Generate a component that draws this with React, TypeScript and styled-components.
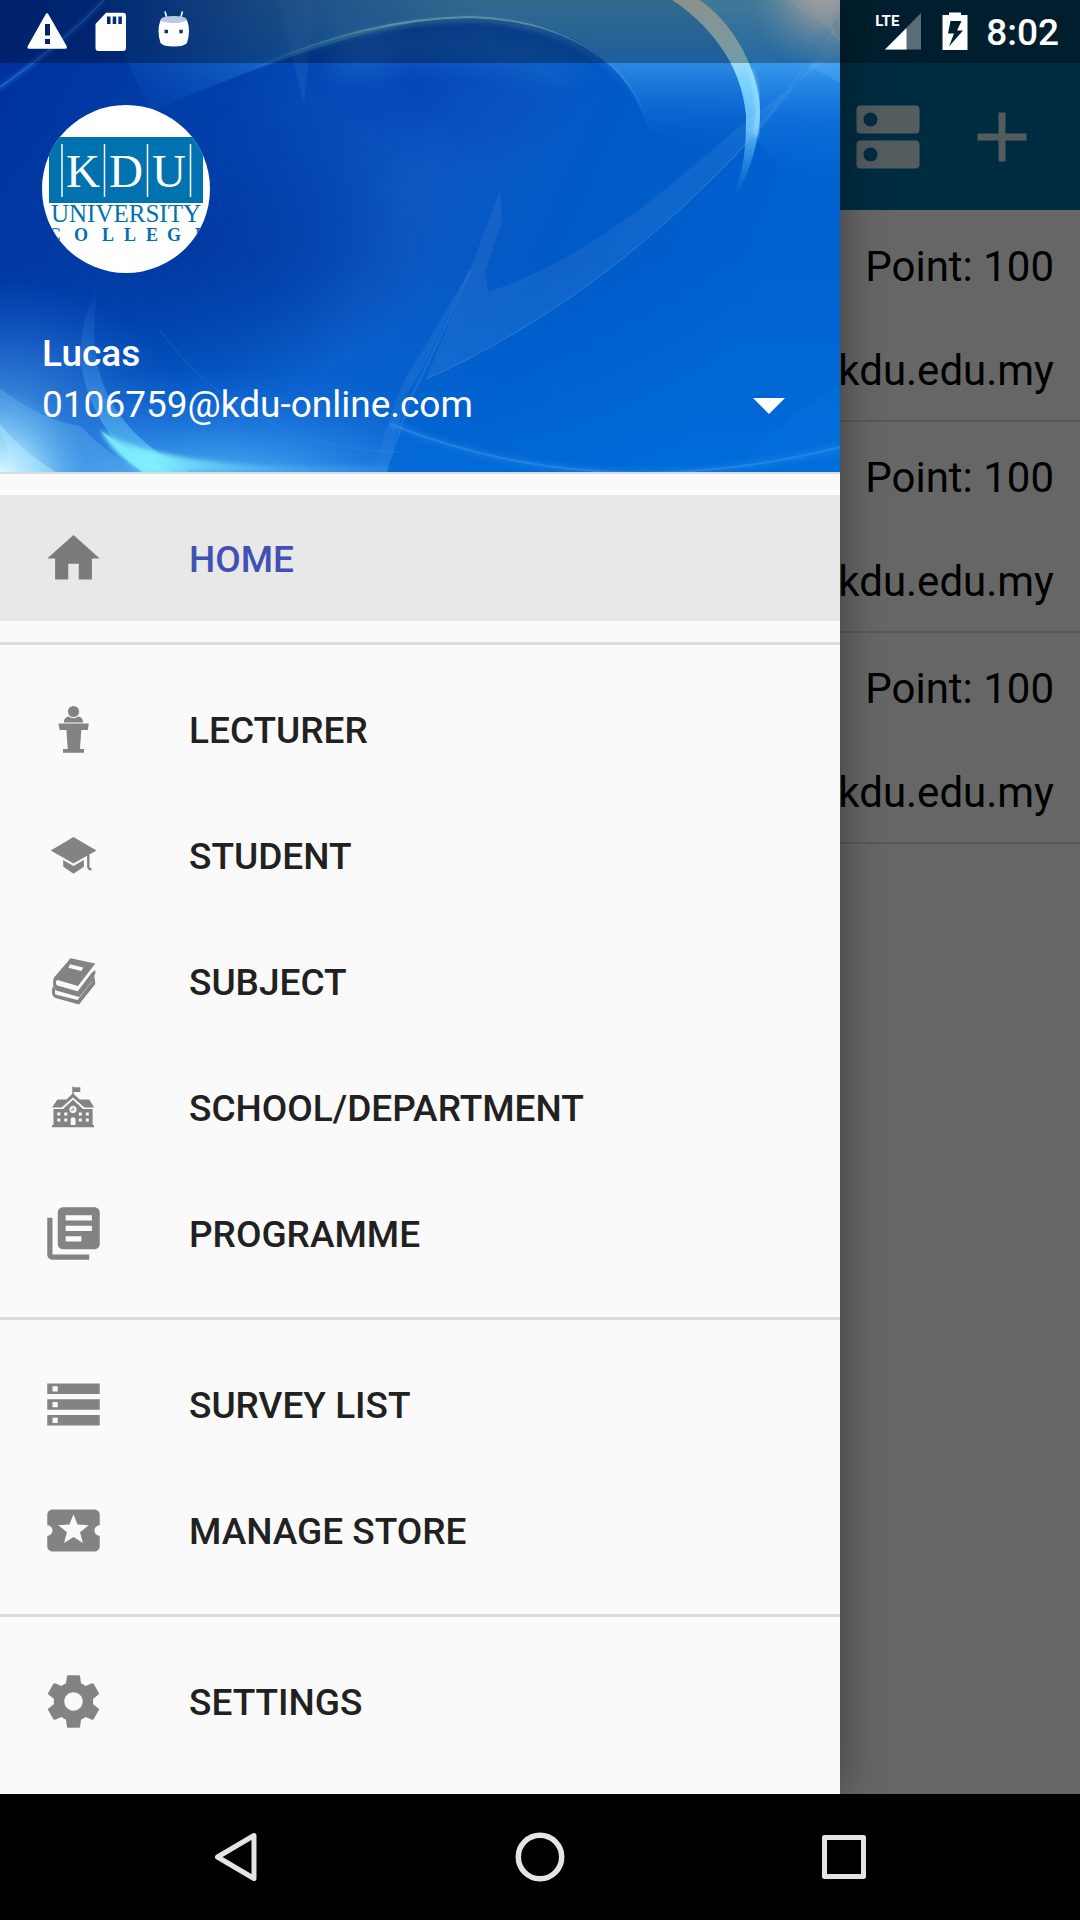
import React from "react";
import styled, { createGlobalStyle } from "styled-components";

const GlobalStyle = createGlobalStyle`
  * { box-sizing: border-box; }
  body { margin: 0; background: #000; font-family: Roboto, "Noto Sans", sans-serif; }
  button { font: inherit; border: 0; padding: 0; background: none; cursor: pointer; }
  svg { display: block; }
`;

const Device = styled.div`
  display: flex;
  flex-direction: column;
  min-height: 100vh;
`;

/* The screen, the scrim, the drawer and the status bar share one grid cell. */
const Stage = styled.div`
  flex: 1;
  display: grid;
  grid-template: minmax(0, 1fr) / minmax(0, 1fr);
  overflow: hidden;
  & > * { grid-area: 1 / 1; }
`;

const Screen = styled.main`
  background: #fff;
`;

const AppBar = styled.header`
  display: flex;
  justify-content: flex-end;
  align-items: center;
  gap: 30px;
  height: 210px;
  padding: 63px 36px 0 0;
  background: #006fa6;
`;

const BarButton = styled.button`
  color: #d2e6f0;
`;

const RecordList = styled.ul`
  margin: 0;
  padding: 1px 0 0;
  list-style: none;
`;

const Record = styled.li`
  display: flex;
  flex-direction: column;
  align-items: flex-end;
  gap: 54px;
  height: 211px;
  padding: 31px 26px 0;
  border-bottom: 2px solid #dedede;
  color: #000;
  font-size: 42px;
  line-height: 50px;
`;

const Scrim = styled.div`
  background: rgba(0, 0, 0, 0.6);
`;

const StatusBar = styled.div`
  align-self: start;
  display: flex;
  justify-content: space-between;
  height: 63px;
  padding: 0 21px 0 26px;
  background: rgba(0, 0, 0, 0.3);
  color: #fff;
`;

const StatusGroup = styled.div<{ $gap: number }>`
  display: flex;
  align-items: center;
  gap: ${(p) => p.$gap}px;
`;

const Signal = styled.div`
  display: grid;
  & > * { grid-area: 1 / 1; }
`;

const NetworkType = styled.span`
  font-size: 15px;
  line-height: 42px;
  font-weight: 700;
`;

const Clock = styled.time`
  font-size: 37px;
  line-height: 63px;
  font-weight: 500;
  padding-top: 2px;
`;

const Drawer = styled.aside`
  display: flex;
  flex-direction: column;
  width: calc(100% - 240px);
  max-width: 840px;
  background: #fafafa;
  box-shadow: 0 0 42px rgba(0, 0, 0, 0.4);
`;

const AccountHeader = styled.div`
  display: grid;
  border-bottom: 2px solid #dcdcdc;
  overflow: hidden;
  & > * { grid-area: 1 / 1; }
`;

const Wallpaper = styled.svg`
  width: 100%;
  height: 100%;
  min-height: 0;
`;

const AccountBody = styled.div`
  display: flex;
  flex-direction: column;
  gap: 55px;
  padding: 105px 55px 42px 42px;
`;

const Avatar = styled.div`
  width: 168px;
  height: 168px;
  border-radius: 50%;
  overflow: hidden;
  background: #fff;
`;

const AccountButton = styled.button`
  display: flex;
  justify-content: space-between;
  align-items: flex-end;
  color: #fff;
  text-align: left;
  font-size: 37px;
  line-height: 51px;
`;

const AccountText = styled.span`
  display: flex;
  flex-direction: column;
`;

const AccountName = styled.span`
  font-weight: 500;
`;

const Caret = styled.svg`
  margin-bottom: 16px;
`;

const Menu = styled.nav`
  display: flex;
  flex-direction: column;
`;

const MenuGroup = styled.ul`
  margin: 0;
  padding: 21px 0;
  list-style: none;
  & + & { border-top: 3px solid #dcdcdc; }
`;

const MenuLink = styled.a<{ $active: boolean }>`
  display: flex;
  align-items: center;
  gap: 84px;
  height: 126px;
  padding: 0 42px;
  background: ${(p) => (p.$active ? "#e8e8e8" : "transparent")};
  color: ${(p) => (p.$active ? "#3f51b5" : "#212121")};
  text-decoration: none;
`;

const MenuLabel = styled.span`
  padding-top: 2px;
  font-size: 37px;
  line-height: 43px;
  font-weight: 500;
`;

const MenuIcon = styled.svg`
  flex: none;
  width: 63px;
  height: 63px;
  color: #000;
  fill: currentColor;
  opacity: 0.47;
`;

const NavBar = styled.footer`
  display: flex;
  justify-content: center;
  height: 126px;
  background: #000;
`;

const NavButton = styled.button`
  flex: 0 1 304px;
  display: flex;
  justify-content: center;
  align-items: center;
`;

type MenuEntry = { label: string; size: number; icon: React.ReactNode; active?: boolean };

const LecturerIcon = (
  <>
    <circle cx="31.5" cy="13.5" r="5.6" />
    <path d="M22 24.5c0-4 2-5.5 5-6 2.500 2.300 6.500 2.300 9 0 3 .5 5 2 5 6z" />
    <path d="M16.500 25.600h30.300l-1 6.400h-6.500l-1.300 19H42v3.700H21V51h4.700l-1.300-19h-6.700z" />
  </>
);

const StudentIcon = (
  <>
    <path d="M31.500 13l23 13.500-23 13L8.700 26.500z" />
    <path d="M21.200 36l10.300 6 10.400-6v6.800l-10.400 6.900-10.300-6.900z" />
    <path d="M46.300 31v11.500q.2 3 3.200 2.800" fill="none" stroke="currentColor" strokeWidth="2.400" />
  </>
);

const SubjectIcon = (
  <>
    <path
      fillRule="evenodd"
      d="M28.500 8.200L53.300 13.500 36 36 15.500 30c-2 .5-2 4.500-.3 5.500l20.500 5.800L49.500 23l3.800-3v4L37 44.800 13.500 38.500c-3.500-2-2.500-8-1.500-11zM28 14.200l-1.700 3.500 13 3.200 1.900-3.300z"
    />
    <path
      fillRule="evenodd"
      d="M11 36l3 3.500c-1.500 1-1.500 4.500.3 5.300L35.500 50 50 31.500l2.500-5.500.8 8L37 54.500 13.500 48c-4.500-2-4-8-2.500-12z"
    />
    <path d="M13 37.500l23.700 6.500L52.500 24.500l-1 5L37.300 47 14 40.600z" />
  </>
);

const SchoolIcon = (
  <>
    <path d="M30.300 10.500h1.300v.8h6.700v4.700h-6.700v3h-1.300z" />
    <path d="M31 17.200l6.600 6.400h9.600l5 8h-9.700L31 21.500 19.700 31.600H10l5.500-8h9z" />
    <path
      fillRule="evenodd"
      d="M31 23.700L41 33h9.600v16H52v2.200H10V49h1.500V33H21zM31 29.800a3.700 3.700 0 1 0 .01 0zM15.300 36.500v3h3v-3zm7 0v3h3v-3zm14.500 0v3h3v-3zm7 0v3h3v-3zM15.300 42.500v3h3v-3zm7 0v3h3v-3zm14.500 0v3h3v-3zm7 0v3h3v-3zM28.700 49h4.800v-6.500q-2.400-2.400-4.800 0z"
    />
    <path d="M31.300 31.500v2.600h-2.300" fill="none" stroke="currentColor" strokeWidth="1" />
  </>
);

const groups: MenuEntry[][] = [
  [{ label: "HOME", size: 24, active: true, icon: <path d="M10 20v-6h4v6h5v-8h3L12 3 2 12h3v8z" /> }],
  [
    { label: "LECTURER", size: 63, icon: LecturerIcon },
    { label: "STUDENT", size: 63, icon: StudentIcon },
    { label: "SUBJECT", size: 63, icon: SubjectIcon },
    { label: "SCHOOL/DEPARTMENT", size: 63, icon: SchoolIcon },
    {
      label: "PROGRAMME",
      size: 24,
      icon: (
        <path d="M4 6H2v14c0 1.100.9 2 2 2h14v-2H4V6zm16-4H8c-1.100 0-2 .9-2 2v12c0 1.100.9 2 2 2h12c1.100 0 2-.9 2-2V4c0-1.100-.9-2-2-2zm-1 9H9V9h10v2zm-4 4H9v-2h6v2zm4-8H9V5h10v2z" />
      ),
    },
  ],
  [
    {
      label: "SURVEY LIST",
      size: 24,
      icon: (
        <path d="M2 20h20v-4H2v4zm2-3h2v2H4v-2zM2 4v4h20V4H2zm4 3H4V5h2v2zm-4 7h20v-4H2v4zm2-3h2v2H4v-2z" />
      ),
    },
    {
      label: "MANAGE STORE",
      size: 24,
      icon: (
        <path d="M20 12c0-1.100.9-2 2-2V6c0-1.100-.9-2-2-2H4c-1.100 0-1.990.9-1.990 2v4c1.100 0 1.990.9 1.990 2s-.89 2-2 2v4c0 1.100.9 2 2 2h16c1.100 0 2-.9 2-2v-4c-1.100 0-2-.9-2-2zm-4.420 4.800L12 14.500l-3.580 2.300 1.080-4.120-3.290-2.690 4.240-.25L12 5.800l1.540 3.950 4.240.25-3.290 2.690 1.090 4.110z" />
      ),
    },
  ],
  [
    {
      label: "SETTINGS",
      size: 24,
      icon: (
        <path d="M19.430 12.980c.04-.32.07-.64.07-.98s-.03-.66-.07-.98l2.110-1.650c.19-.15.24-.42.12-.64l-2-3.460c-.12-.22-.39-.3-.61-.22l-2.490 1c-.52-.4-1.080-.73-1.690-.98l-.38-2.650C14.460 2.180 14.250 2 14 2h-4c-.25 0-.46.18-.49.42l-.38 2.650c-.61.25-1.170.59-1.690.98l-2.490-1c-.23-.09-.49 0-.61.22l-2 3.460c-.13.22-.07.49.12.64l2.110 1.650c-.04.32-.07.65-.07.98s.03.66.07.98l-2.110 1.650c-.19.15-.24.42-.12.64l2 3.460c.12.22.39.3.61.22l2.490-1c.52.4 1.080.73 1.690.98l.38 2.650c.03.24.24.42.49.42h4c.25 0 .46-.18.49-.42l.38-2.650c.61-.25 1.170-.59 1.690-.98l2.490 1c.23.09.49 0 .61-.22l2-3.460c.12-.22.07-.49-.12-.64l-2.110-1.650zM12 15.500c-1.930 0-3.500-1.570-3.500-3.500s1.570-3.500 3.500-3.500 3.500 1.570 3.500 3.500-1.570 3.500-3.500 3.500z" />
      ),
    },
  ],
];

const records = [1, 2, 3].map((id) => ({ id, points: 100, site: "kdu.edu.my" }));

function HeaderArt() {
  return (
    <Wallpaper viewBox="0 0 840 472" preserveAspectRatio="xMidYMid slice" aria-hidden="true">
      <defs>
        <linearGradient id="base" x1="0" y1="0" x2="1" y2="0.250">
          <stop offset="0" stopColor="#00309a" />
          <stop offset="0.300" stopColor="#0040ac" />
          <stop offset="0.550" stopColor="#0e59c4" />
          <stop offset="0.750" stopColor="#0059c6" />
          <stop offset="1" stopColor="#0063d0" />
        </linearGradient>
        <linearGradient id="floor" x1="0" y1="0" x2="0" y2="1">
          <stop offset="0.550" stopColor="#0070de" stopOpacity="0" />
          <stop offset="1" stopColor="#0070de" stopOpacity="0.600" />
        </linearGradient>
        <linearGradient id="skyTop" gradientUnits="userSpaceOnUse" x1="0" y1="0" x2="0" y2="150">
          <stop offset="0" stopColor="#4a98c8" />
          <stop offset="0.450" stopColor="#2a88e2" stopOpacity="0.950" />
          <stop offset="0.700" stopColor="#1c74da" stopOpacity="0.550" />
          <stop offset="1" stopColor="#0f60cc" stopOpacity="0" />
        </linearGradient>
        <linearGradient id="fadeIn" gradientUnits="userSpaceOnUse" x1="80" y1="0" x2="480" y2="0">
          <stop offset="0" stopColor="#000" />
          <stop offset="0.600" stopColor="#999" />
          <stop offset="1" stopColor="#fff" />
        </linearGradient>
        <mask id="skyMask" maskUnits="userSpaceOnUse" x="0" y="0" width="840" height="472">
          <rect width="840" height="472" fill="url(#fadeIn)" />
        </mask>
        <linearGradient id="corner" x1="0" y1="0" x2="0" y2="1">
          <stop offset="0" stopColor="#5cacd8" />
          <stop offset="0.350" stopColor="#3496ea" />
          <stop offset="0.600" stopColor="#1878e0" stopOpacity="0.700" />
          <stop offset="1" stopColor="#0064d4" stopOpacity="0" />
        </linearGradient>
        <linearGradient id="ring" x1="0" y1="0" x2="0" y2="1">
          <stop offset="0" stopColor="#c8d0c8" />
          <stop offset="0.280" stopColor="#a8e0ee" />
          <stop offset="0.400" stopColor="#7cd4ff" />
          <stop offset="0.650" stopColor="#6cc8ff" stopOpacity="0.850" />
          <stop offset="1" stopColor="#2d8cf0" stopOpacity="0" />
        </linearGradient>
        <linearGradient id="arc" gradientUnits="userSpaceOnUse" x1="250" y1="0" x2="650" y2="0">
          <stop offset="0" stopColor="#5fb8e8" stopOpacity="0" />
          <stop offset="0.350" stopColor="#7cd4e4" />
          <stop offset="0.700" stopColor="#7ccce8" />
          <stop offset="1" stopColor="#4fa8f4" stopOpacity="0" />
        </linearGradient>
        <radialGradient id="night">
          <stop offset="0" stopColor="#00389e" stopOpacity="0.850" />
          <stop offset="0.500" stopColor="#003aa2" stopOpacity="0.500" />
          <stop offset="1" stopColor="#003aa2" stopOpacity="0" />
        </radialGradient>
        <radialGradient id="cobalt">
          <stop offset="0" stopColor="#0444b8" stopOpacity="0.800" />
          <stop offset="1" stopColor="#0648b8" stopOpacity="0" />
        </radialGradient>
        <radialGradient id="floorGlow">
          <stop offset="0" stopColor="#60bcf6" />
          <stop offset="0.450" stopColor="#3490e8" stopOpacity="0.700" />
          <stop offset="1" stopColor="#1a68d4" stopOpacity="0" />
        </radialGradient>
        <radialGradient id="haze">
          <stop offset="0" stopColor="#60acec" stopOpacity="0.850" />
          <stop offset="0.500" stopColor="#4488e0" stopOpacity="0.450" />
          <stop offset="1" stopColor="#2a68d0" stopOpacity="0" />
        </radialGradient>
        <linearGradient id="rim" gradientUnits="userSpaceOnUse" x1="90" y1="0" x2="400" y2="0">
          <stop offset="0" stopColor="#68ccfc" />
          <stop offset="0.200" stopColor="#80f0fc" />
          <stop offset="0.500" stopColor="#60c0f8" stopOpacity="0.700" />
          <stop offset="1" stopColor="#3898f0" stopOpacity="0.400" />
        </linearGradient>
        <linearGradient id="petal" gradientUnits="userSpaceOnUse" x1="0" y1="280" x2="0" y2="472">
          <stop offset="0" stopColor="#3c90e8" stopOpacity="0" />
          <stop offset="0.500" stopColor="#48a4f0" stopOpacity="0.350" />
          <stop offset="1" stopColor="#70dcfc" stopOpacity="0.700" />
        </linearGradient>
        <radialGradient id="cornerSun" cx="825" cy="-10" r="80" gradientUnits="userSpaceOnUse">
          <stop offset="0" stopColor="#f4ecec" />
          <stop offset="0.400" stopColor="#d4dce4" stopOpacity="0.700" />
          <stop offset="1" stopColor="#7fc0f0" stopOpacity="0" />
        </radialGradient>
        <radialGradient id="floorSun" cx="0" cy="480" r="90" gradientUnits="userSpaceOnUse">
          <stop offset="0" stopColor="#e8fcff" />
          <stop offset="0.400" stopColor="#a8e4ff" stopOpacity="0.800" />
          <stop offset="1" stopColor="#58b0f0" stopOpacity="0" />
        </radialGradient>
        <filter id="soft2" x="-20%" y="-20%" width="140%" height="140%">
          <feGaussianBlur stdDeviation="2" />
        </filter>
        <filter id="soft14" x="-50%" y="-50%" width="200%" height="200%">
          <feGaussianBlur stdDeviation="14" />
        </filter>
        <clipPath id="leftOfStreak">
          <path d="M0 0H480L470 270 410 400 386 472H0z" />
        </clipPath>
      </defs>

      <rect width="840" height="472" fill="url(#base)" />
      <rect width="840" height="472" fill="url(#floor)" />
      <ellipse cx="190" cy="240" rx="250" ry="150" fill="url(#night)" />
      <ellipse cx="420" cy="90" rx="170" ry="100" fill="url(#cobalt)" />

      <g mask="url(#skyMask)">
        <path d="M150 112C300 48 400 18 470 17 570 18 628 60 648 130L700 150H760V100Q750 40 700 0H100z" fill="url(#skyTop)" />
        <path d="M330 60Q450 10 590 70L560 80Q450 40 330 70z" fill="#2c84dc" opacity="0.400" filter="url(#soft14)" />
      </g>
      <path d="M278 0H315L304 105z" fill="#5a9ce0" opacity="0.120" />
      <path d="M310 0H400L385 78 340 80z" fill="#3a90e0" opacity="0.180" filter="url(#soft14)" />
      <path d="M700 0H840V190Q790 190 757 140 765 60 700 0z" fill="url(#corner)" />
      <path d="M785 0Q818 16 840 42V0z" fill="#a4c4d8" opacity="0.500" />
      <path d="M840 12Q830 14 834 28T840 36z" fill="#3c88c0" opacity="0.500" />
      <path d="M810 66Q826 76 840 83V50z" fill="#50acf4" opacity="0.400" />
      <rect x="740" width="100" height="90" fill="url(#cornerSun)" />
      <path d="M672 0H700C742 30 762 84 760 116 758 146 748 180 732 200 744 170 746 150 746 116 742 62 706 22 672 0z" fill="url(#ring)" />
      <path d="M750 70Q762 100 756 136" fill="none" stroke="#b4ecff" strokeWidth="4" opacity="0.600" filter="url(#soft2)" />
      <path d="M240 74C330 34 400 18 470 17 570 20 634 66 650 130" fill="none" stroke="url(#arc)" strokeWidth="2" />
      <path d="M240 76C330 36 400 20 470 19 568 22 630 68 648 130" fill="none" stroke="url(#arc)" strokeWidth="6" opacity="0.350" filter="url(#soft2)" />
      <path d="M104 0Q62 44 0 88" fill="none" stroke="#1f70e8" strokeWidth="3" opacity="0.800" filter="url(#soft2)" />
      <path d="M104 0Q62 44 0 87" fill="none" stroke="#3a88e8" strokeWidth="1" opacity="0.700" />

      <path d="M488 292C580 262 660 196 735 130L840 50V16C800 90 760 130 735 156 640 254 540 328 426 379L470 270 500 190 502 222 485 272z" fill="#fff" opacity="0.060" />
      <path d="M470 270C450 310 430 360 406 396L386 472H372C390 420 400 380 420 355z" fill="#fff" opacity="0.060" />
      <path d="M426 379C540 328 640 254 735 156 780 104 810 60 840 18" fill="none" stroke="#5aa4f0" strokeWidth="1" opacity="0.400" />
      <path d="M470 270Q440 340 410 400L386 472" fill="none" stroke="#6aa8f0" strokeWidth="2" opacity="0.200" />

      <ellipse cx="0" cy="430" rx="190" ry="150" fill="url(#haze)" />
      <g clipPath="url(#leftOfStreak)">
        <ellipse cx="210" cy="490" rx="320" ry="120" fill="url(#floorGlow)" />
      </g>
      <path d="M100 280C70 340 70 400 142 472H190C110 430 80 370 100 280z" fill="url(#petal)" />
      <path d="M100 430C108 446 124 462 142 472H388V466C260 470 150 462 100 430z" fill="url(#rim)" filter="url(#soft2)" />
      <path d="M100 430Q118 454 142 472H172Q132 454 100 430z" fill="#80f0ff" opacity="0.600" />
      <path d="M0 388Q40 420 80 426 110 456 140 472H0z" fill="#7cc8f4" opacity="0.280" />
      <path d="M0 424Q20 450 56 472H0z" fill="#c8f4ff" opacity="0.600" />
      <path d="M0 434Q8 440 7 452T0 460z" fill="#68a8d8" opacity="0.500" />
      <rect y="360" width="120" height="112" fill="url(#floorSun)" />
      <path d="M160 330C210 400 290 450 400 452" fill="none" stroke="#4a98f0" strokeWidth="1" opacity="0.250" />

      <path d="M390 424Q600 508 840 447V472H386z" fill="#1484ec" opacity="0.120" />
      <path d="M390 424Q600 508 840 447" fill="none" stroke="#48a4f8" strokeWidth="2" opacity="0.350" />
      <path d="M390 424Q600 508 840 447" fill="none" stroke="#48a4f8" strokeWidth="8" opacity="0.180" filter="url(#soft2)" />
      <path d="M840 384Q780 420 745 460H840z" fill="#1a88f0" opacity="0.120" filter="url(#soft2)" />
    </Wallpaper>
  );
}

function Logo() {
  return (
    <svg width="168" height="168" viewBox="0 0 168 168" role="img" aria-label="KDU University College">
      <rect x="7" y="32" width="154" height="66" fill="#0072b0" />
      <path d="M20 39v53M62.500 39v53M105.500 39v53M148.500 39v53" stroke="#fff" strokeWidth="1.500" />
      <g fontFamily="'Liberation Serif', serif">
        <text x="24 67 110" y="82" fontSize="47" fill="#fff">KDU</text>
        <text x="84" y="117" fontSize="25" textAnchor="middle" fill="#0072b0">UNIVERSITY</text>
        <text x="6 32 60 82 104 125 153" y="136" fontSize="18" fontWeight="700" fill="#0072b0">COLLEGE</text>
      </g>
    </svg>
  );
}

export default function App() {
  return (
    <Device>
      <GlobalStyle />
      <Stage>
        <Screen>
          <AppBar>
            <BarButton aria-label="Servers">
              <svg width="84" height="84" viewBox="0 0 24 24" fill="currentColor">
                <path d="M20 13H4c-.55 0-1 .45-1 1v6c0 .55.45 1 1 1h16c.55 0 1-.45 1-1v-6c0-.55-.45-1-1-1zM7 19c-1.100 0-2-.9-2-2s.9-2 2-2 2 .9 2 2-.9 2-2 2zM20 3H4c-.55 0-1 .45-1 1v6c0 .55.45 1 1 1h16c.55 0 1-.45 1-1V4c0-.55-.45-1-1-1zM7 9c-1.100 0-2-.9-2-2s.9-2 2-2 2 .9 2 2-.9 2-2 2z" />
              </svg>
            </BarButton>
            <BarButton aria-label="Add">
              <svg width="84" height="84" viewBox="0 0 24 24" fill="currentColor">
                <path d="M19 13h-6v6h-2v-6H5v-2h6V5h2v6h6v2z" />
              </svg>
            </BarButton>
          </AppBar>
          <RecordList>
            {records.map((r) => (
              <Record key={r.id}>
                <span>Point: {r.points}</span>
                <span>{r.site}</span>
              </Record>
            ))}
          </RecordList>
        </Screen>
        <Scrim />
        <Drawer>
          <AccountHeader>
            <HeaderArt />
            <AccountBody>
              <Avatar>
                <Logo />
              </Avatar>
              <AccountButton>
                <AccountText>
                  <AccountName>Lucas</AccountName>
                  <span>0106759@kdu-online.com</span>
                </AccountText>
                <Caret width="32" height="16" viewBox="0 0 32 16" fill="#fff" aria-hidden="true">
                  <path d="M0 0h32L16 16z" />
                </Caret>
              </AccountButton>
            </AccountBody>
          </AccountHeader>
          <Menu>
            {groups.map((entries) => (
              <MenuGroup key={entries[0].label}>
                {entries.map((e) => (
                  <li key={e.label}>
                    <MenuLink href="#" $active={!!e.active}>
                      <MenuIcon viewBox={`0 0 ${e.size} ${e.size}`} aria-hidden="true">
                        {e.icon}
                      </MenuIcon>
                      <MenuLabel>{e.label}</MenuLabel>
                    </MenuLink>
                  </li>
                ))}
              </MenuGroup>
            ))}
          </Menu>
        </Drawer>
        <StatusBar>
          <StatusGroup $gap={21}>
            <svg width="42" height="63" viewBox="0 0 42 63" fill="#fff">
              <path fillRule="evenodd" d="M19.500 14.500q1.500-2.500 3 0L40.600 46q.9 2.700-1 2.700H2.800q-2 0-1-2.700zM19 24v11.500h5V24zM19 39v5h5v-5z" />
            </svg>
            <svg width="42" height="63" viewBox="0 0 42 63" fill="#fff">
              <path fillRule="evenodd" d="M17 12.700H34q3 0 3 3V48q0 3-3 3H9.500q-3 0-3-3V24zM18 16.500V24h3.500v-7.500zM23.700 16.500V24h3.500v-7.500zM29.400 16.500V24h3.500v-7.500z" />
            </svg>
            <svg width="42" height="63" viewBox="0 0 42 63" fill="#fff">
              <path d="M13 11.500l2 7M30.500 11.500l-2 7" stroke="#fff" strokeWidth="1.600" />
              <path fillRule="evenodd" d="M8.500 20q-4 11 0 23 3 3.500 13.200 3.500T35 43q4-12 0-23-13 5-26.500 0zM12.500 29.700v3.500H16v-3.500zM27.300 29.700v3.500h3.500v-3.500z" />
              <ellipse cx="21.700" cy="19.500" rx="13" ry="3.500" fill="#bcc8e2" />
            </svg>
          </StatusGroup>
          <StatusGroup $gap={18}>
            <Signal>
              <svg width="46" height="63" viewBox="0 0 46 63" aria-hidden="true">
                <path d="M10 49.500L46 13v36.500z" fill="#fff" opacity="0.350" />
                <path d="M10 49.500L31.500 28v21.500z" fill="#fff" />
              </svg>
              <NetworkType>LTE</NetworkType>
            </Signal>
            <svg width="29" height="63" viewBox="-2 0 29 63" fill="#fff" aria-hidden="true">
              <path fillRule="evenodd" d="M8 12.500h12V15h6.500v35h-25V15H8zM9.500 21L7 33.500h6l-5 13 14-16h-6l4.500-9.500z" />
            </svg>
            <Clock>8:02</Clock>
          </StatusGroup>
        </StatusBar>
      </Stage>
      <NavBar>
        <NavButton aria-label="Back">
          <svg width="50" height="50" viewBox="0 0 50 50" fill="none" stroke="#e4e4e4" strokeWidth="5" strokeLinejoin="round">
            <path d="M43 3.500v43L6.500 25z" />
          </svg>
        </NavButton>
        <NavButton aria-label="Home">
          <svg width="50" height="50" viewBox="0 0 50 50" fill="none" stroke="#e4e4e4" strokeWidth="5.500">
            <circle cx="25" cy="25" r="21.700" />
          </svg>
        </NavButton>
        <NavButton aria-label="Recent apps">
          <svg width="50" height="50" viewBox="0 0 50 50" fill="none" stroke="#e4e4e4" strokeWidth="5" strokeLinejoin="round">
            <path d="M5.500 5.500h39v39h-39z" />
          </svg>
        </NavButton>
      </NavBar>
    </Device>
  );
}
